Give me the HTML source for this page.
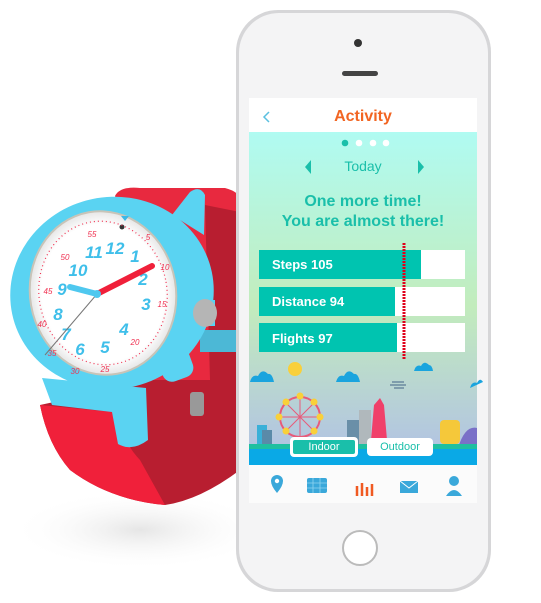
<!DOCTYPE html>
<html><head><style>
body{margin:0;width:541px;height:603px;background:#fff;overflow:hidden;position:relative;font-family:"Liberation Sans",sans-serif}
</style></head><body>
<svg width="541" height="603" style="position:absolute;left:0;top:0">
<defs>
<linearGradient id="g" x1="0" y1="0" x2="0" y2="1"><stop offset="0" stop-color="#b0fbf2"/><stop offset="0.55" stop-color="#c2ecbc"/><stop offset="1" stop-color="#b2c4e2"/></linearGradient>
<radialGradient id="face" cx="0.5" cy="0.5" r="0.5"><stop offset="0.85" stop-color="#fff"/><stop offset="1" stop-color="#e8e8e8"/></radialGradient>
<radialGradient id="sh" cx="0.5" cy="0.5" r="0.5"><stop offset="0" stop-color="#ccc" stop-opacity=".5"/><stop offset="1" stop-color="#fff" stop-opacity="0"/></radialGradient>
</defs>
<ellipse cx="140" cy="530" rx="130" ry="40" fill="url(#sh)"/>
<!-- top strap -->
<path d="M115 196 Q120 186 140 188 L225 188 Q240 192 240 200 L240 380 L150 380 L130 240 Z" fill="#e8293f"/>
<path d="M205 205 L240 212 L240 380 L210 380 Z" fill="#b81e30"/>
<rect x="200" y="330" width="40" height="22" fill="#4cb8d6"/>
<!-- bottom strap -->
<path d="M150 380 L240 380 L240 470 Q200 500 165 505 Q110 500 70 470 Q48 445 40 405 L110 390 Z" fill="#b81e30"/>
<path d="M40 405 Q48 445 70 470 Q110 500 165 505 L140 460 Q125 445 114 412 Z" fill="#f0203a"/>
<rect x="190" y="392" width="14" height="24" rx="3" fill="#999"/>
<!-- case -->
<path d="M42 378 L146 388 L148 440 Q132 452 118 444 L112 412 L52 405 Z" fill="#5ad3f2"/>
<path d="M172 215 L190 192 Q200 185 205 195 L204 235 Z" fill="#5ad3f2"/>
<ellipse cx="112" cy="293" rx="102" ry="96" transform="rotate(-12 112 293)" fill="#5ad3f2"/>
<ellipse cx="103" cy="293" rx="74" ry="83" transform="rotate(-10 103 293)" fill="#c8c4b8"/>
<ellipse cx="103" cy="293" rx="72" ry="81" transform="rotate(-10 103 293)" fill="url(#face)"/>
<rect x="185" y="300" width="30" height="26" fill="#5ad3f2"/>
<ellipse cx="205" cy="313" rx="12" ry="14" fill="#b5b5b5"/>
<rect x="160" y="350" width="32" height="30" rx="10" transform="rotate(-20 176 365)" fill="#5ad3f2"/>
<path d="M121 216 l8 0 l-4 5z" fill="#3cb8e6"/>
<circle cx="122" cy="227" r="2.5" fill="#333"/>
<ellipse cx="103" cy="293" rx="64" ry="72" transform="rotate(-10 103 293)" fill="none" stroke="#f03050" stroke-width="1.2" stroke-dasharray="1 3"/>
<g font-size="17" font-weight="bold" fill="#3fbfea" text-anchor="middle" font-style="italic">
<text x="115" y="254">12</text><text x="135" y="262">1</text><text x="143" y="285">2</text><text x="146" y="310">3</text><text x="124" y="335">4</text><text x="105" y="353">5</text><text x="80" y="355">6</text><text x="66" y="340">7</text><text x="58" y="320">8</text><text x="62" y="295">9</text><text x="78" y="276">10</text><text x="94" y="258">11</text></g>
<g font-size="8" fill="#f03050" text-anchor="middle" font-style="italic">
<text x="92" y="237">55</text><text x="148" y="240">5</text><text x="165" y="270">10</text><text x="162" y="307">15</text><text x="135" y="345">20</text><text x="105" y="372">25</text><text x="75" y="374">30</text><text x="52" y="356">35</text><text x="42" y="327">40</text><text x="48" y="294">45</text><text x="65" y="260">50</text></g>
<line x1="97" y1="294" x2="45" y2="355" stroke="#777" stroke-width="1"/>
<line x1="97" y1="294" x2="152" y2="266" stroke="#f0203a" stroke-width="6" stroke-linecap="round"/>
<line x1="97" y1="294" x2="70" y2="287" stroke="#4fc8ef" stroke-width="6" stroke-linecap="round"/>
<circle cx="97" cy="294" r="4" fill="#4fc8ef"/>
<!-- phone -->
<rect x="236" y="10" width="255" height="582" rx="42" fill="#d6d6d8"/>
<rect x="239" y="13" width="249" height="576" rx="40" fill="#f4f4f5"/>
<circle cx="358" cy="43" r="4" fill="#333"/>
<rect x="342" y="71" width="36" height="5" rx="2.5" fill="#444"/>
<circle cx="360" cy="548" r="17" fill="#fff" stroke="#bbb" stroke-width="2"/>
<rect x="249" y="98" width="228" height="405" fill="#fff"/>
<rect x="249" y="132" width="228" height="316" fill="url(#g)"/>
<rect x="249" y="448" width="228" height="17" fill="#0aa9e6"/>
<rect x="249" y="465" width="228" height="38" fill="#fbfbfb"/>
<path d="M269 112 L264 117 L269 122" stroke="#5bc0e0" stroke-width="1.5" fill="none"/>
<circle cx="345" cy="143" r="3.3" fill="#1abfaa"/><circle cx="359" cy="143" r="3.3" fill="#fff"/><circle cx="373" cy="143" r="3.3" fill="#fff"/><circle cx="386" cy="143" r="3.3" fill="#fff"/>
<path d="M311 160 L305 167 L311 174 Z" fill="#1abfaa"/><path d="M418 160 L424 167 L418 174 Z" fill="#1abfaa"/>
<rect x="259" y="250" width="206" height="29" fill="#fff"/><rect x="259" y="250" width="162" height="29" fill="#00c4b0"/>
<rect x="259" y="287" width="206" height="29" fill="#fff"/><rect x="259" y="287" width="136" height="29" fill="#00c4b0"/>
<rect x="259" y="323" width="206" height="29" fill="#fff"/><rect x="259" y="323" width="138" height="29" fill="#00c4b0"/>
<path d="M404 243 L404 360" stroke="#e0001a" stroke-width="3" stroke-dasharray="2 1"/>
<!-- city -->
<path d="M250 382 q2-8 8-6 q4-8 10-2 q4-1 6 8z M336 382 q2-8 8-6 q4-8 10-2 q4-1 6 8z M414 371 q2-7 7-5 q3-6 8-1 q3 0 4 6z M470 388 q2-7 7-5 q3-6 6-1z" fill="#1aa4de"/>
<circle cx="295" cy="369" r="7" fill="#f9d03a"/>
<path d="M392 382 h12 M390 385 h16 M394 388 h10" stroke="#6a8aa0" stroke-width="1.5"/>
<circle cx="300" cy="417" r="20" fill="none" stroke="#e85a7a" stroke-width="2"/>
<path d="M300 397 V437 M280 417 H320 M286 403 L314 431 M314 403 L286 431" stroke="#e85a7a" stroke-width="1"/>
<g fill="#f9d03a"><circle cx="300" cy="396" r="3.5"/><circle cx="314" cy="402" r="3.5"/><circle cx="320" cy="417" r="3.5"/><circle cx="314" cy="431" r="3.5"/><circle cx="286" cy="402" r="3.5"/><circle cx="279" cy="417" r="3.5"/><circle cx="286" cy="431" r="3.5"/></g>
<rect x="359" y="410" width="12" height="35" fill="#b0b8bc"/><rect x="347" y="420" width="12" height="25" fill="#6a8fa8"/>
<rect x="257" y="425" width="10" height="20" fill="#3ab0d8"/><rect x="262" y="430" width="10" height="15" fill="#5a8aa8"/>
<path d="M371 440 L374 405 L380 398 L384 405 L387 440Z" fill="#f0406a"/>
<rect x="440" y="420" width="20" height="24" rx="4" fill="#f5c83a"/>
<path d="M458 448 Q465 425 477 428 L477 448Z" fill="#7a70c8"/>
<rect x="249" y="444" width="228" height="5" fill="#1fc0a0"/>
<rect x="290" y="437" width="68" height="20" rx="4" fill="#fff"/><rect x="293" y="440" width="62" height="14" rx="2" fill="#1abfaa"/>
<rect x="367" y="438" width="66" height="18" rx="4" fill="#fff"/>
<!-- tab icons -->
<path d="M271 481 a6 6 0 1 1 12 0 q0 5-6 12 q-6-7-6-12z" fill="#3aa8da"/><circle cx="277" cy="481" r="2.2" fill="#fff"/>
<rect x="307" y="478" width="20" height="15" rx="2" fill="#3aa8da"/>
<path d="M307 483 h20 M307 488 h20 M313 478 v15 M320 478 v15" stroke="#8fd4f0" stroke-width="0.8"/>
<path d="M357 496 v-10 M362 496 v-13 M367 496 v-9 M372 496 v-12" stroke="#f05a22" stroke-width="2.5"/>
<rect x="400" y="481" width="18" height="12" fill="#3aa8da"/><path d="M400 481 L409 488 L418 481" stroke="#fff" fill="none"/>
<circle cx="454" cy="481" r="5" fill="#3aa8da"/><path d="M446 496 q8-12 16 0z" fill="#3aa8da"/>
</svg>
<div style="position:absolute;left:249px;top:108px;width:228px;text-align:center;color:#f26522;font-size:16px;font-weight:bold">Activity</div>
<div style="position:absolute;left:249px;top:158px;width:228px;text-align:center;color:#1abfaa;font-size:14px">Today</div>
<div style="position:absolute;left:249px;top:192px;width:228px;text-align:center;color:#1abfaa;font-size:16px;font-weight:bold;line-height:20px">One more time!<br>You are almost there!</div>
<div style="position:absolute;left:272px;top:257px;color:#fff;font-size:13px;font-weight:bold">Steps 105</div>
<div style="position:absolute;left:272px;top:294px;color:#fff;font-size:13px;font-weight:bold">Distance 94</div>
<div style="position:absolute;left:272px;top:331px;color:#fff;font-size:13px;font-weight:bold">Flights 97</div>
<div style="position:absolute;left:293px;top:440px;width:62px;text-align:center;color:#fff;font-size:11px;line-height:14px">Indoor</div>
<div style="position:absolute;left:367px;top:440px;width:66px;text-align:center;color:#1abfaa;font-size:11px;line-height:14px">Outdoor</div>
</body></html>
